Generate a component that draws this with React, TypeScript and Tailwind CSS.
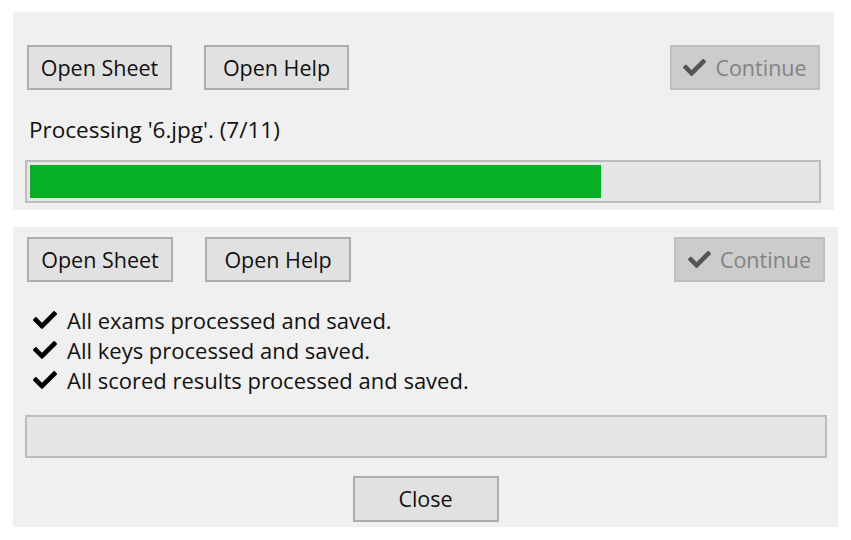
import React from 'react';
import { FaCheck } from 'react-icons/fa';

const font = { fontFamily: '"Open Sans", "Noto Sans", sans-serif' };

const WinButton: React.FC<{ label: string; className?: string }> = ({ label, className }) => (
  <button className={`h-[45px] border-2 border-[#adadad] bg-[#e1e1e1] text-[21.5px] text-[#111] leading-none ${className ?? ''}`}>
    {label}
  </button>
);

const ContinueButton: React.FC<{ className?: string }> = ({ className }) => (
  <button
    disabled
    className={`h-[45px] flex items-center justify-center gap-[9px] border-2 border-[#bfbfbf] bg-[#cccccc] text-[21.5px] text-[#838383] leading-none ${className ?? ''}`}
  >
    <FaCheck className="text-[#555555]" size={23} />
    <span>Continue</span>
  </button>
);

const Bar: React.FC<{ pct: number; className?: string }> = ({ pct, className }) => (
  <div className={`h-[43px] border-2 border-[#bcbcbc] bg-[#e6e6e6] p-[3px] ${className ?? ''}`}>
    {pct > 0 && <div className="h-full bg-[#06b025]" style={{ width: `${pct}%` }} />}
  </div>
);

const done = [
  'All exams processed and saved.',
  'All keys processed and saved.',
  'All scored results processed and saved.',
];

export default function App() {
  return (
    <div className="w-[851px] h-[540px] bg-white pt-[12px] pl-[13px] overflow-hidden" style={font}>
      {/* in progress */}
      <div className="w-[821px] h-[198px] bg-[#f0f0f0] flex flex-col">
        <div className="flex items-start mt-[33px] pl-[14px] pr-[14px]">
          <WinButton label="Open Sheet" className="w-[145px]" />
          <WinButton label="Open Help" className="w-[145px] ml-[32px]" />
          <ContinueButton className="w-[150px] ml-auto" />
        </div>
        <p className="mt-[25px] ml-[16px] text-[22.5px] text-[#111] leading-[30px]">Processing '6.jpg'. (7/11)</p>
        <Bar pct={72.6} className="mt-[15px] ml-[12px] mr-[13px]" />
      </div>

      {/* finished */}
      <div className="w-[825px] h-[300px] mt-[17px] bg-[#f0f0f0] flex flex-col">
        <div className="flex items-start mt-[10px] pl-[14px] pr-[13px]">
          <WinButton label="Open Sheet" className="w-[146px]" />
          <WinButton label="Open Help" className="w-[146px] ml-[32px]" />
          <ContinueButton className="w-[151px] ml-auto" />
        </div>
        <div className="mt-[23px] ml-[20px] flex flex-col">
          {done.map(t => (
            <div key={t} className="flex items-center h-[30px] gap-[10px] text-[22px] text-[#111]">
              <FaCheck size={24} className="text-black" />
              <span>{t}</span>
            </div>
          ))}
        </div>
        <Bar pct={0} className="mt-[20px] ml-[12px] mr-[11px]" />
        <div className="flex justify-center mt-[18px]">
          <WinButton label="Close" className="w-[146px] h-[46px]" />
        </div>
      </div>
    </div>
  );
}
